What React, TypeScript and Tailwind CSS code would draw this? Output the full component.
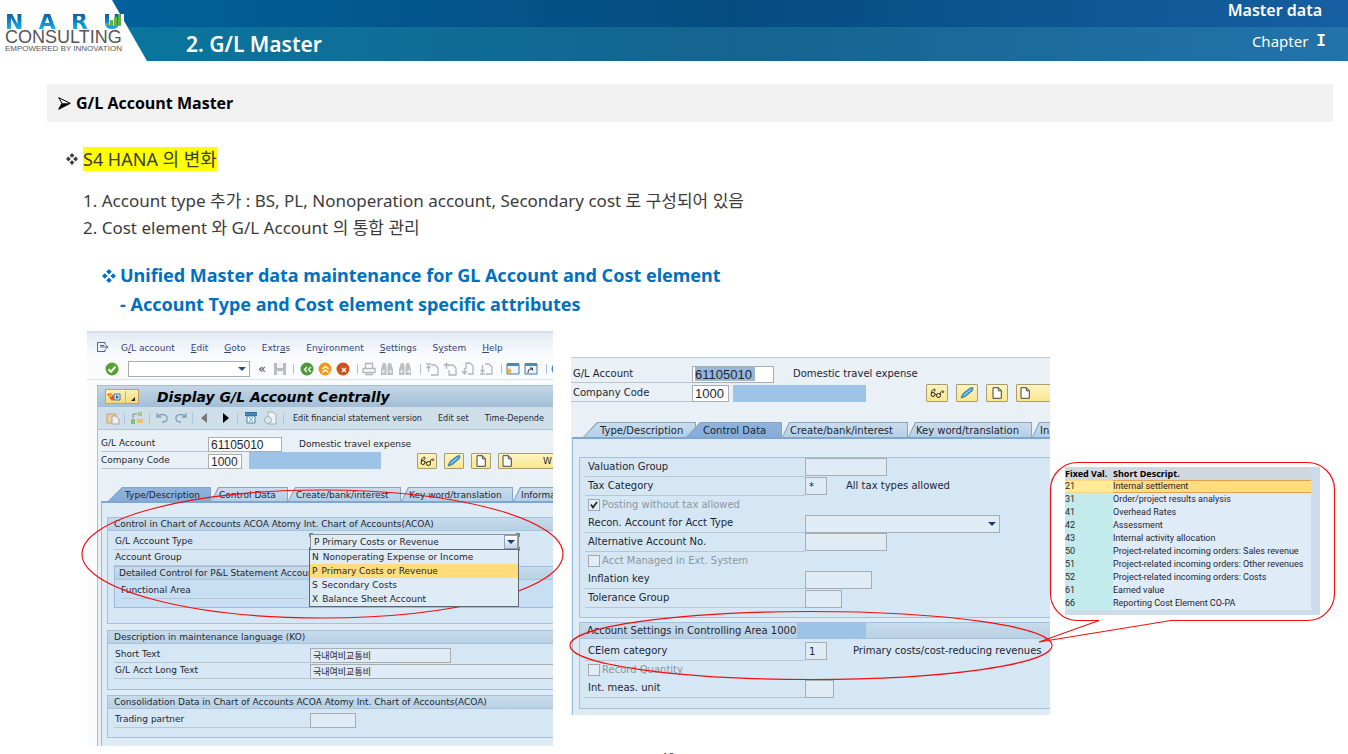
import type { ReactNode } from 'react';

const sap = "font-['DejaVu_Sans','Noto_Sans_CJK_KR',sans-serif]";

/* ---------- header ---------- */

function Logo() {
  return (
    <a href="#" aria-label="Naru Consulting" className="relative z-10 flex w-31 flex-col bg-white pr-[3px] pl-[5px] font-['Liberation_Sans',sans-serif] no-underline">
      <span className="flex h-4 items-center justify-between bg-linear-to-b from-[#0c5fa8] to-[#18b4e8] bg-clip-text font-['DejaVu_Sans',sans-serif] text-[22px] leading-4 font-bold text-transparent">
        <span>N</span>
        <span>A</span>
        <span>R</span>
        <span>U</span>
      </span>
      <svg viewBox="0 0 16 12" className="absolute top-0 right-0.5 h-3 w-4" aria-hidden="true">
        <path d="M0 9h3v3H0zM4 6h3v6H4zM8 3h3v9H8zM12 0h3v12h-3z" fill="#62b345" />
      </svg>
      <span className="text-[18px] leading-[15px] text-[#55565a]">CONSULTING</span>
      <span className="text-[8px] leading-[8px] whitespace-nowrap text-[#55565a]">EMPOWERED BY INNOVATION</span>
    </a>
  );
}

function Header() {
  return (
    <header className="flex h-[61px] font-['Noto_Sans',sans-serif] text-white">
      <div className="flex w-28 shrink-0 items-start pt-[14px]">
        <Logo />
      </div>
      <div className="flex flex-1 flex-col [clip-path:polygon(0_0,100%_0,100%_100%,35px_100%)]">
        <div className="flex h-[27px] items-start justify-end bg-linear-to-r from-[#02609a] via-[#044c80] to-[#155fa2] pr-[26px]">
          <span className="text-base leading-5 font-semibold">Master data</span>
        </div>
        <div className="flex h-[34px] items-center justify-between bg-linear-to-r from-[#08769d] via-[#14648f] to-[#2273ab] pr-[22px] pl-[74px]">
          <h1 className="text-[21px] leading-[34px] font-semibold">2. G/L Master</h1>
          <span className="flex items-center gap-2 pb-1.5 text-[15px]">
            Chapter <b className="font-['DejaVu_Sans_Mono',monospace] text-base">I</b>
          </span>
        </div>
      </div>
    </header>
  );
}

/* ---------- shared parts ---------- */

function Diamonds({ className }: { className: string }) {
  return (
    <svg viewBox="0 0 12 12" className={className} fill="currentColor" aria-hidden="true">
      <path d="M6 0l2.400 2.400L6 4.800 3.600 2.400zM6 7.200l2.400 2.400L6 12 3.600 9.600zM2.400 3.600L4.800 6 2.400 8.400 0 6zM9.600 3.600L12 6 9.600 8.400 7.200 6z" />
    </svg>
  );
}

function Tab({ children, active, wide, className }: { children: ReactNode; active?: boolean; wide?: boolean; className: string }) {
  const clip = wide
    ? '[clip-path:polygon(14px_0,100%_0,100%_100%,0_100%)]'
    : '[clip-path:polygon(7px_0,100%_0,100%_100%,0_100%)]';
  const fill = active ? 'bg-linear-to-b from-[#8fb3dc] to-[#86abd8]' : 'bg-linear-to-b from-[#cadcec] to-[#b4cfe6]';
  return (
    <button type="button" role="tab" aria-selected={!!active} className={`flex h-full shrink-0 bg-[#86a5c4] p-px pb-0 ${clip} ${className}`}>
      <span className={`flex h-full w-full items-center pt-px whitespace-nowrap ${wide ? 'pl-4' : 'pl-[7px]'} ${clip} ${fill}`}>{children}</span>
    </button>
  );
}

const field = 'shrink-0 rounded-none border border-[#a9adb2] bg-[#dfebf5] outline-none';

function Glasses() {
  return (
    <svg viewBox="0 0 16 12" className="h-3 w-4" fill="none" stroke="#222" strokeWidth="1" aria-hidden="true">
      <circle cx="4" cy="7.500" r="2" />
      <circle cx="9.500" cy="8.500" r="2" />
      <path d="M6 7.600c.6-.6 1.200-.5 1.600.2M2.400 6C2.500 3.500 4.500 1.500 6 2.500c1 .8-.5 2-1.300 1.500M11.400 7.600C11.500 5 12.800 3.200 14.300 4c1 .7 0 2-1 1.600" />
    </svg>
  );
}

function Pencil() {
  return (
    <svg viewBox="0 0 14 12" className="h-3 w-3.5" aria-hidden="true">
      <path d="M1 11l2-4.500L10 1l3-.3-.5 3L5.500 9.500z" fill="#4f9fd6" stroke="#2b6f9f" strokeWidth=".8" />
      <path d="M3.500 8.500L11 2.500" stroke="#a7d3f0" strokeWidth="1" />
    </svg>
  );
}

function Page() {
  return (
    <svg viewBox="0 0 10 12" className="h-3 w-2.5 shrink-0" aria-hidden="true">
      <path d="M1 .7h5.500L9.300 3.600v7.700H1z" fill="#fff" stroke="#444" />
      <path d="M6.300.7v3.100h3" fill="none" stroke="#444" />
    </svg>
  );
}

function ActionButtons({ size, tail }: { size: 'sm' | 'md'; tail?: string }) {
  const base = 'flex shrink-0 items-center rounded-[1px] border border-[#a79c72] bg-linear-to-b from-[#fdf3c0] to-[#fae78e]';
  const box = size === 'sm' ? 'h-4 w-5 justify-center' : 'h-[18px] w-[22px] justify-center';
  return (
    <div className={`flex min-w-0 flex-1 ${size === 'sm' ? 'gap-[7px]' : 'gap-2'}`}>
      <button type="button" aria-label="Display" className={`${base} ${box}`}><Glasses /></button>
      <button type="button" aria-label="Change" className={`${base} ${box}`}><Pencil /></button>
      <button type="button" aria-label="Create" className={`${base} ${box}`}><Page /></button>
      <button type="button" aria-label="Create with template" className={`${base} ${size === 'sm' ? 'h-4 w-20' : 'h-[18px] w-20'} gap-[31px] pl-[3px]`}>
        <Page />
        <span>{tail}</span>
      </button>
    </div>
  );
}

/* ---------- left window ---------- */

const menu: [string, string, string][] = [
  ['G', '/', 'L account'],
  ['', 'E', 'dit'],
  ['', 'G', 'oto'],
  ['Extr', 'a', 's'],
  ['En', 'v', 'ironment'],
  ['', 'S', 'ettings'],
  ['S', 'y', 'stem'],
  ['', 'H', 'elp'],
];

function Round({ fill, children, label }: { fill: string; children: ReactNode; label: string }) {
  return (
    <button type="button" aria-label={label} className="shrink-0">
      <svg viewBox="0 0 14 14" className="size-3.5" fill="none" stroke="#fff" strokeWidth="1.400">
        <circle cx="7" cy="7" r="6.500" fill={fill} stroke="none" />
        {children}
      </svg>
    </button>
  );
}

function Gray({ d, label, stroke = '#b3b5b8' }: { d: string; label: string; stroke?: string }) {
  return (
    <button type="button" aria-label={label} className="shrink-0">
      <svg viewBox="0 0 14 14" className="size-3.5" fill="none" stroke={stroke} strokeWidth="1.300">
        <path d={d} />
      </svg>
    </button>
  );
}

function Bar() {
  return <span className="h-2.5 w-px shrink-0 bg-[#a9c3d8]" />;
}

function SystemToolbar() {
  return (
    <div className="flex h-[22px] items-center overflow-hidden border-b border-[#dde3ea] bg-[#fafbfc] pl-[18px]">
      <Round fill="#55a233" label="Enter"><path d="M3.500 7.200l2.500 2.500 4.500-5" strokeWidth="2" /></Round>
      <div className="relative ml-[9px] flex shrink-0">
        <input aria-label="Command" className="h-4 w-[122px] border border-[#a4adb8] bg-white px-1 outline-none" />
        <svg viewBox="0 0 8 4" className="absolute top-1.5 right-1 h-1 w-2"><path d="M0 0h8L4 4z" fill="#2c4a80" /></svg>
      </div>
      <span className="mr-[7px] ml-2 text-[13px] leading-4 text-[#444]">«</span>
      <button type="button" aria-label="Save" className="shrink-0">
        <svg viewBox="0 0 14 14" className="size-3.5"><path d="M1 1h12v12H1z" fill="#b9bbbe" /><path d="M4 1h6v5H4zM4 9h6v4H4z" fill="#f4f5f6" /></svg>
      </button>
      <span className="ml-[6px] flex items-center gap-1">
        <Bar />
        <span className="ml-0.5 flex gap-1">
          <Round fill="#4c9a35" label="Back"><path d="M7 5L4.500 7.500 7 10M11 5L8.500 7.500 11 10" /></Round>
          <Round fill="#f09a1a" label="Exit"><path d="M4.500 7L7.500 4.500l3 2.500M4.500 10.500L7.500 8l3 2.500" /></Round>
          <Round fill="#d2501c" label="Cancel"><path d="M6 6l4 4M10 6l-4 4" /></Round>
        </span>
        <span className="ml-[3px] flex items-center gap-1">
          <Bar />
          <Gray label="Print" d="M3.500 6V1.500h7V6M1 6.500h12v4H1zM3 12.500h8" />
          <button type="button" aria-label="Find" className="shrink-0">
            <svg viewBox="0 0 14 14" className="size-3.5" fill="#bdbfc2"><path d="M3 1h2.500l1 3v9H1V7zM11 1H8.500l-1 3v9H13V7z" /><path d="M2.500 8h2v3h-2zM9.500 8h2v3h-2z" fill="#eceded" /></svg>
          </button>
          <button type="button" aria-label="Find next" className="shrink-0">
            <svg viewBox="0 0 14 14" className="size-3.5" fill="#bdbfc2"><path d="M3 1h2.500l1 3v9H1V7zM11 1H8.500l-1 3v9H13V7z" /><path d="M2.500 8h2v3h-2zM8.500 9h5v1h-5zM10.500 7h1v5h-1z" fill="#eceded" /></svg>
          </button>
        </span>
        <span className="ml-1 flex items-center gap-1">
          <Bar />
          <Gray label="First page" d="M6 3h4l3 3v7H6M1 2h5M3.500 10V4M1.500 6l2-2 2 2" />
          <Gray label="Previous page" d="M6 3h4l3 3v7H6V8M1 4l2.500-2.500L6 4M3.500 2v5" />
          <Gray label="Next page" d="M5 7V1h4l3 3v8H7M1 9l2.500 3L6 9M3.500 6v6" />
          <Gray label="Last page" d="M6 2h4l3 3v7H7M1 12h5M3.500 3v7M1.500 8l2 2 2-2" />
        </span>
        <span className="ml-1 flex items-center gap-1">
          <Bar />
          <svg viewBox="0 0 14 14" className="size-3.5 shrink-0"><path d="M1 2h12v10H1z" fill="#eef6fb" stroke="#3c7da8" /><path d="M1 1h12v3H1z" fill="#4a8bb5" /><path d="M0 9h6M3 6v6M1 7l4 4M5 7l-4 4" stroke="#f4a31c" /></svg>
          <svg viewBox="0 0 14 14" className="size-3.5 shrink-0"><path d="M1 2h12v10H1z" fill="#eef6fb" stroke="#3c7da8" /><path d="M1 1h12v3H1z" fill="#4a8bb5" /><path d="M4 11c0-3 1-4 4-4M6 6h2.500v2.500" stroke="#333" fill="none" /></svg>
        </span>
        <span className="ml-1 flex items-center gap-1">
          <Bar />
          <Round fill="#3c8fbd" label="Help"><path d="M5 5c0-2 4-2 4 0s-2 1.500-2 3" /></Round>
        </span>
      </span>
    </div>
  );
}

function LeftToolbar() {
  return (
    <div className="flex h-[23px] items-center overflow-hidden border-b border-[#b4c6d4] bg-[#cfdfea] pl-2 font-['DejaVu_Sans_Condensed','DejaVu_Sans',sans-serif] whitespace-nowrap">
      <svg viewBox="0 0 14 14" className="size-3.5 shrink-0"><path d="M1 3h9v9H1z" fill="#f0cfa0" stroke="#cba36c" /><path d="M6 5h4l3 3v5H6z" fill="#eee" stroke="#a5a5a5" /></svg>
      <span className="ml-1 flex items-center gap-[5px]">
        <Bar />
        <svg viewBox="0 0 14 14" className="size-3.5 shrink-0"><path d="M8 1h4v4H8z" fill="#a4c88a" /><path d="M1 8h4v5H1z" fill="#8fb878" /><path d="M7 8h6v4H7z" fill="#f0bd7c" /><path d="M3 7V3h4" fill="none" stroke="#888" /></svg>
        <Bar />
        <Gray label="Undo" stroke="#7d9fba" d="M2 2v4h4M2 6c3-4 11-3 10 2 0 2-2 3-5 3" />
        <Gray label="Redo" stroke="#7d9fba" d="M12 2v4H8M12 6C9 2 1 3 2 8c0 2 2 3 5 3" />
      </span>
      <span className="ml-1 flex items-center gap-2">
        <Bar />
        <svg viewBox="0 0 6 10" className="h-2.5 w-1.5 shrink-0"><path d="M6 0v10L0 5z" fill="#777" /></svg>
        <svg viewBox="0 0 6 10" className="ml-2 h-2.5 w-1.5 shrink-0"><path d="M0 0v10l6-5z" fill="#000" /></svg>
        <Bar />
      </span>
      <span className="ml-[6px] flex gap-[5px]">
        <svg viewBox="0 0 14 14" className="size-3.5 shrink-0"><path d="M1 1h12v4H1z" fill="#2e6f98" /><path d="M3 5h8v7H3z" fill="#fff" stroke="#3d81aa" /><path d="M5 6l4 5M9 6l-4 5M1 3h12" stroke="#5ca6cc" /></svg>
        <svg viewBox="0 0 14 14" className="size-3.5 shrink-0"><path d="M5 1h5l3 3v9H5z" fill="#eef2f5" stroke="#9fb0bd" /><circle cx="5" cy="9" r="3.500" fill="#dbe6ee" stroke="#9fb0bd" /></svg>
      </span>
      <span className="ml-[6px] flex items-center">
        <Bar />
        <button type="button" className="ml-[9px]">Edit financial statement version</button>
        <button type="button" className="ml-4">Edit set</button>
        <button type="button" className="ml-4">Time-Depende</button>
      </span>
    </div>
  );
}

function GroupTitle({ children, className = '' }: { children: ReactNode; className?: string }) {
  return (
    <h3 className={`flex items-center border-b border-[#a9c2d9] bg-linear-to-b from-[#c6dbeb] to-[#b9d1e5] whitespace-nowrap ${className}`}>{children}</h3>
  );
}

const group = 'border border-r-0 border-[#a5c0dc] bg-[#d5e6f4]';
const smallLabel = 'flex h-4 shrink-0 items-center border-b border-[#bcc5cc] whitespace-nowrap';

function LeftWindow() {
  return (
    <section className={`flex w-[466px] shrink-0 flex-col overflow-hidden bg-[#fafbfc] text-[9px] leading-none text-[#1d2733] ${sap}`}>
      <nav className="flex h-[27px] shrink-0 items-center gap-[17px] border-t-2 border-[#d5dde9] bg-linear-to-b from-[#e4ebf5] to-[#fbfcfe] pt-1.5 pl-[10px] text-[#33437a]">
        <svg viewBox="0 0 12 10" className="-mt-1 -mr-1 h-2.5 w-3" fill="none" stroke="#56627c" aria-hidden="true">
          <path d="M8 2.500v-2H.5v9H8v-2M3 5h8M8.500 3L11 5 8.500 7M3 3.500h4" />
        </svg>
        {menu.map(([a, b, c]) => (
          <a key={a + b + c} href="#" className="-ml-px">{a}<u>{b}</u>{c}</a>
        ))}
      </nav>
      <SystemToolbar />
      <div className="mt-[5px] ml-2.5 flex flex-1 flex-col border-l border-[#a9bfd4] bg-[#e9f0f6]">
        <div className="flex h-[22px] shrink-0 items-center border-t border-[#a9bfd2] bg-linear-to-b from-[#c4d7e6] to-[#a2bed6] pl-[7px]">
          <button type="button" aria-label="Services" className="flex h-[15px] w-[34px] items-center border border-[#b9a560] bg-linear-to-b from-[#fdf1b4] to-[#f6d878]">
            <svg viewBox="0 0 30 12" className="h-3 w-[30px]"><path d="M1 3l4-1 4 5-3 3z" fill="#e2571c" /><path d="M3 3h3v3H3z" fill="#f6b018" /><path d="M8 3h6v6H8z" fill="#d9e8f6" stroke="#3d75b0" /><path d="M10 4l3 2-3 2z" fill="#2a5c9c" /><path d="M19.500 0v12" stroke="#cdb568" /><path d="M29 6v4h-4z" fill="#222" /></svg>
          </button>
          <h2 className="ml-[18px] text-[14px] font-bold whitespace-nowrap text-black italic">Display G/L Account Centrally</h2>
        </div>
        <LeftToolbar />
        <div className="mt-1.5 ml-[3px] flex items-end">
          <label htmlFor="l-account" className={`${smallLabel} w-[107px]`}>G/L Account</label>
          <input id="l-account" readOnly defaultValue="61105010" className="h-[15px] w-[74px] border border-[#a9adb2] bg-white px-0.5 font-['Liberation_Sans',sans-serif] text-[12px] outline-none" />
          <span className="ml-[17px] pb-[3px]">Domestic travel expense</span>
        </div>
        <div className="ml-[3px] flex h-[17px] items-end">
          <label htmlFor="l-company" className={`${smallLabel} w-[107px]`}>Company Code</label>
          <input id="l-company" readOnly defaultValue="1000" className="h-[15px] w-[34px] border border-[#a9adb2] bg-white px-0.5 font-['Liberation_Sans',sans-serif] text-[12px] outline-none" />
          <span className="mr-9 ml-[7px] h-[17px] w-[132px] bg-[#9dc3e6]" />
          <ActionButtons size="sm" tail="W" />
        </div>
        <div role="tablist" className="mt-[18px] ml-[3px] flex h-3.5 shrink-0 pl-[7px]">
          <Tab wide active className="w-[103px]">Type/Description</Tab>
          <Tab className="w-[77px]">Control Data</Tab>
          <Tab className="w-[113px]">Create/bank/interest</Tab>
          <Tab className="w-[112px]">Key word/translation</Tab>
          <Tab className="w-[112px]">Informa</Tab>
        </div>
        <div className="ml-[3px] flex flex-1 flex-col border-t-2 border-l border-t-[#7ea5d3] border-l-[#9ab8da] bg-[#dfebf5] pt-3.5 pl-[5px]">
          <div className={`${group} h-[107px]`}>
            <GroupTitle className="h-[13px] pl-1.5">Control in Chart of Accounts ACOA Atomy Int. Chart of Accounts(ACOA)</GroupTitle>
            <div className="pt-[3px] pl-1.5">
              <div className="relative flex">
                <label htmlFor="l-type" className={`${smallLabel} w-[196px] pl-px`}>G/L Account Type</label>
                <select id="l-type" defaultValue="P" className="h-4 w-[209px] appearance-none border border-[#8d9298] bg-[#dfebf5] px-[3px] outline-none">
                  <option value="P">P Primary Costs or Revenue</option>
                </select>
                <span className="pointer-events-none absolute top-px left-[390px] flex h-3.5 w-3.5 items-center justify-center border border-[#8ba0bd] bg-linear-to-b from-white to-[#c3d4e8]">
                  <svg viewBox="0 0 8 4" className="h-1 w-2"><path d="M0 0h8L4 4z" fill="#1f3c70" /></svg>
                </span>
                <svg viewBox="0 0 211 18" className="pointer-events-none absolute -top-px left-[195px] h-[18px] w-[211px]" fill="none" stroke="#d8505c">
                  <path d="M4 .5H.5V4M.5 14v3.500H4M207 .5h3.500V4M210.500 14v3.500H207" />
                </svg>
                <ul role="listbox" className="absolute top-[15px] left-[195px] z-10 w-[210px] border border-[#62676d] bg-[#dfebf5] whitespace-nowrap">
                  <li className="flex h-3.5 items-center gap-1 pl-0.5"><span>N</span>Nonoperating Expense or Income</li>
                  <li className="flex h-3.5 items-center gap-1 bg-[#ffdc7c] pl-0.5"><span>P</span>Primary Costs or Revenue</li>
                  <li className="flex h-3.5 items-center gap-1 pl-0.5"><span>S</span>Secondary Costs</li>
                  <li className="flex h-3.5 items-center gap-1 pl-0.5"><span>X</span>Balance Sheet Account</li>
                </ul>
              </div>
              <div className={`${smallLabel} w-[196px] pl-px`}>Account Group</div>
              <div className="h-[42px] border border-r-0 border-[#9dbad8] bg-[#c8def3]">
                <GroupTitle className="h-[13px] pl-1">Detailed Control for P&amp;L Statement Accoun</GroupTitle>
                <div className={`${smallLabel} mt-[3px] ml-1.5 w-[186px]`}>Functional Area</div>
              </div>
            </div>
          </div>
          <div className={`${group} mt-1.5 h-[60px]`}>
            <GroupTitle className="h-[13px] pl-1.5">Description in maintenance language (KO)</GroupTitle>
            <div className="pt-[3px] pl-1.5">
              <div className="flex items-center">
                <label htmlFor="l-short" className={`${smallLabel} w-[196px] pl-px`}>Short Text</label>
                <input id="l-short" readOnly defaultValue="국내여비교통비" className={`${field} h-[15px] w-[141px] px-0.5`} />
              </div>
              <div className="flex items-center overflow-hidden">
                <label htmlFor="l-long" className={`${smallLabel} w-[196px] pl-px`}>G/L Acct Long Text</label>
                <input id="l-long" readOnly defaultValue="국내여비교통비" className={`${field} h-[15px] w-[260px] px-0.5`} />
              </div>
            </div>
          </div>
          <div className={`${group} mt-[5px] mb-2 h-[43px]`}>
            <GroupTitle className="h-[13px] pl-1.5">Consolidation Data in Chart of Accounts ACOA Atomy Int. Chart of Accounts(ACOA)</GroupTitle>
            <div className="flex items-center pt-[3px] pl-1.5">
              <label htmlFor="l-partner" className={`${smallLabel} w-[196px] pl-px`}>Trading partner</label>
              <input id="l-partner" readOnly className={`${field} h-[15px] w-[46px]`} />
            </div>
          </div>
        </div>
      </div>
    </section>
  );
}

/* ---------- right window ---------- */

const rowLabel = 'flex h-full w-[220px] shrink-0 items-center border-b border-[#bcc5cc] pl-[3px] whitespace-nowrap';

function FormRow({ id, label, width, value, note, noteGap = '' }: { id: string; label: string; width: string; value?: string; note?: string; noteGap?: string }) {
  return (
    <div className="flex items-center">
      <label htmlFor={id} className={rowLabel}>{label}</label>
      <input id={id} readOnly defaultValue={value} className={`${field} h-[18px] px-[3px] ${width}`} />
      {note && <span className={`whitespace-nowrap ${noteGap}`}>{note}</span>}
    </div>
  );
}

function CheckRow({ id, label, checked }: { id: string; label: string; checked?: boolean }) {
  return (
    <div className="relative flex items-center gap-0.5 pl-[3px] text-[#8c979f]">
      <input id={id} type="checkbox" defaultChecked={checked} className="size-3 appearance-none border border-[#a3a8ad] bg-[#e2edf6]" />
      {checked && (
        <svg viewBox="0 0 8 8" className="pointer-events-none absolute left-[5px] size-2" fill="none" stroke="#222b44" strokeWidth="1.800">
          <path d="M1 3.500L3 6.500 7 1" />
        </svg>
      )}
      <label htmlFor={id}>{label}</label>
    </div>
  );
}

function RightWindow() {
  return (
    <section className={`mt-[26px] flex w-[479px] shrink-0 flex-col overflow-hidden border-t border-[#b4c8d8] bg-[#e9f0f6] text-[10px] leading-none text-[#1d2733] ${sap}`}>
      <div className="mt-[7px] flex h-[18px] items-center">
        <label htmlFor="r-account" className="flex h-full w-[121px] shrink-0 items-center border-b border-[#bcc5cc] pl-0.5">G/L Account</label>
        <div className="flex h-[17px] w-[82px] shrink-0 items-center border border-[#a9adb2] bg-white pl-0.5">
          <input id="r-account" readOnly defaultValue="61105010" className="h-3.5 w-[60px] bg-[#9ab6d8] font-['Liberation_Sans',sans-serif] text-[13px] outline-none" />
        </div>
        <span className="ml-[19px] whitespace-nowrap">Domestic travel expense</span>
      </div>
      <div className="mt-px flex h-[18px] items-center">
        <label htmlFor="r-company" className="flex h-full w-[121px] shrink-0 items-center border-b border-[#bcc5cc] pl-0.5">Company Code</label>
        <input id="r-company" readOnly defaultValue="1000" className="h-[17px] w-[37px] border border-[#a9adb2] bg-white px-0.5 font-['Liberation_Sans',sans-serif] text-[13px] outline-none" />
        <span className="mr-[60px] ml-1 h-[17px] w-[133px] shrink-0 bg-[#9dc3e6]" />
        <ActionButtons size="md" />
      </div>
      <div role="tablist" className="mt-[20px] flex h-[15px] shrink-0 pl-3">
        <Tab wide className="w-[113px]">Type/Description</Tab>
        <Tab wide active className="-ml-2.5 w-[96px]">Control Data</Tab>
        <Tab className="w-[126px]">Create/bank/interest</Tab>
        <Tab className="w-[124px]">Key word/translation</Tab>
        <Tab className="w-[124px]">In</Tab>
      </div>
      <div className="ml-px flex flex-1 flex-col border-t-2 border-l border-t-[#7ea5d3] border-l-[#9ab8da] bg-[#dfebf5] pt-[18px] pl-[6px]">
        <div className={`${group} h-[161px] pl-[5px]`}>
          <div className="grid h-[150px] auto-rows-fr">
            <FormRow id="r-val" label="Valuation Group" width="w-[82px]" />
            <FormRow id="r-tax" label="Tax Category" width="w-[22px]" value="*" note="All tax types allowed" noteGap="ml-[19px]" />
            <CheckRow id="r-post" label="Posting without tax allowed" checked />
            <div className="relative flex items-center">
              <label htmlFor="r-recon" className={rowLabel}>Recon. Account for Acct Type</label>
              <select id="r-recon" className={`${field} h-[18px] w-[195px] appearance-none`} />
              <svg viewBox="0 0 8 4" className="pointer-events-none absolute left-[403px] h-1 w-2"><path d="M0 0h8L4 4z" fill="#1f3c70" /></svg>
            </div>
            <FormRow id="r-alt" label="Alternative Account No." width="w-[82px]" />
            <CheckRow id="r-ext" label="Acct Managed in Ext. System" />
            <FormRow id="r-inf" label="Inflation key" width="w-[67px]" />
            <FormRow id="r-tol" label="Tolerance Group" width="w-[37px]" />
          </div>
        </div>
        <div className={`${group} mt-1 mb-[6px] h-[87px]`}>
          <h3 className="flex h-4 items-center border-b border-[#a9c2d9] bg-linear-to-b from-[#c6dbeb] to-[#b9d1e5] pl-[7px] whitespace-nowrap">
            Account Settings in Controlling Area 1000
            <span className="mr-[184px] ml-px h-4 flex-1 bg-[#9dc3e6]" />
          </h3>
          <div className="mt-[3px] grid h-[56px] auto-rows-fr pl-[5px]">
            <FormRow id="r-cat" label="CElem category" width="w-[22px]" value="1" note="Primary costs/cost-reducing revenues" noteGap="ml-[26px]" />
            <CheckRow id="r-qty" label="Record Quantity" />
            <FormRow id="r-unit" label="Int. meas. unit" width="w-[29px]" />
          </div>
        </div>
      </div>
    </section>
  );
}

/* ---------- callout ---------- */

const categories: [string, string][] = [
  ['21', 'Internal settlement'],
  ['31', 'Order/project results analysis'],
  ['41', 'Overhead Rates'],
  ['42', 'Assessment'],
  ['43', 'Internal activity allocation'],
  ['50', 'Project-related incoming orders: Sales revenue'],
  ['51', 'Project-related incoming orders: Other revenues'],
  ['52', 'Project-related incoming orders: Costs'],
  ['61', 'Earned value'],
  ['66', 'Reporting Cost Element CO-PA'],
];

function Callout() {
  return (
    <aside className="mt-[136px] ml-[15px] w-[255px] shrink-0 bg-[#cddceb] pr-[9px] pb-[5px] font-['Roboto',sans-serif] text-[9px] leading-[13px] text-[#1d2733]">
      <table className="w-full table-fixed border-collapse text-left whitespace-nowrap">
        <thead>
          <tr className="h-[13px] bg-[#d1d7de] font-['Noto_Sans',sans-serif] text-black">
            <th className="w-12 p-0 font-bold">Fixed Val.</th>
            <th className="p-0 font-bold">Short Descript.</th>
          </tr>
        </thead>
        <tbody>
          {categories.map(([code, text], i) => (
            <tr key={code} className={i === 0 ? 'h-[13px] bg-[#ffdc7c] shadow-[inset_0_1px_#e0a050,inset_0_-1px_#e0a050]' : 'h-[13px] bg-[#dfebf7]'}>
              <td className={i === 0 ? 'bg-[#fff0a0]/70 p-0' : 'bg-[#c4ebec] p-0'}>{code}</td>
              <td className="p-0">{text}</td>
            </tr>
          ))}
        </tbody>
      </table>
    </aside>
  );
}

/* Red marker strokes drawn over the figures. */
function Markup() {
  return (
    <svg viewBox="0 0 1256 300" className="pointer-events-none absolute top-[126px] -left-[7px] h-[300px] w-[1256px]" fill="none" stroke="#f01010" strokeWidth="1.200" aria-hidden="true">
      <ellipse cx="242.500" cy="97" rx="240.500" ry="64" />
      <ellipse cx="731" cy="188.500" rx="241" ry="34" />
      <path d="M1019 163.500H998a27 27 0 0 1-27.500-27.500V32.500A27 27 0 0 1 998 5.500h229a27 27 0 0 1 27.500 27v103.500a27 27 0 0 1-27.500 27.500H1091L959 185z" />
    </svg>
  );
}

export default function App() {
  return (
    <div className="flex h-screen flex-col overflow-hidden bg-white font-['Noto_Sans','Noto_Sans_CJK_KR',sans-serif]">
      <Header />
      <main className="flex flex-col">
        <h2 className="mt-[23px] mr-[15px] ml-[47px] flex h-[38px] items-center gap-[5px] bg-[#f1f1f1] pl-[11px] font-['Open_Sans',sans-serif] text-base font-bold text-black">
          <svg viewBox="0 0 13 13" className="size-[13px]" aria-hidden="true">
            <path d="M.7.7L12.300 6.300.7 12.300 4 6.300z" fill="none" stroke="#000" />
            <path d="M4 6.300h8.300L.7 12.300z" />
          </svg>
          G/L Account Master
        </h2>
        <h3 className="mt-[25px] ml-[66px] flex items-center gap-[5px] text-lg leading-6 text-[#3b3b3b]">
          <Diamonds className="size-3" />
          <mark className="bg-[#ffff00] text-[#3b3b3b]">S4 HANA 의 변화</mark>
        </h3>
        <ol className="mt-4 ml-[83px] text-[17px] leading-[27px] text-[#3b3b3b]">
          <li>1. Account type 추가 : BS, PL, Nonoperation account, Secondary cost 로 구성되어 있음</li>
          <li>2. Cost element 와 G/L Account 의 통합 관리</li>
        </ol>
        <div className="mt-5 ml-[102px] text-lg leading-[29px] font-bold text-[#0070c0]">
          <p className="flex items-center gap-1">
            <Diamonds className="size-3.5" />
            Unified Master data maintenance for GL Account and Cost element
          </p>
          <p className="pl-[18px]">- Account Type and Cost element specific attributes</p>
        </div>
        <div className="relative mt-3 ml-[87px] flex items-start">
          <div className="mr-[18px] flex shrink-0"><LeftWindow /></div>
          <RightWindow />
          <Callout />
          <Markup />
        </div>
      </main>
      <footer className="mt-[3px] ml-[662px] text-[11px] leading-4 text-[#333]">18</footer>
    </div>
  );
}
